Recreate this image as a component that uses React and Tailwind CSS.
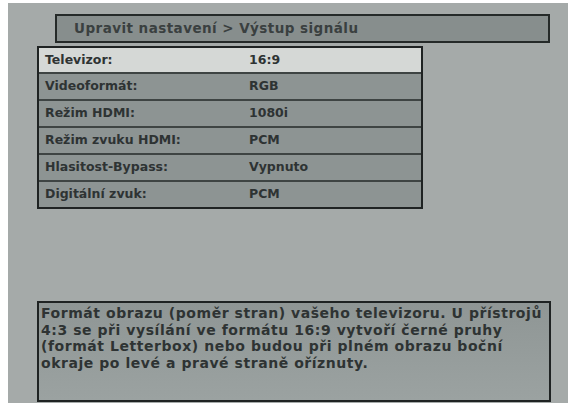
const rows = [
  ["Televizor:", "16:9"],
  ["Videoformát:", "RGB"],
  ["Režim HDMI:", "1080i"],
  ["Režim zvuku HDMI:", "PCM"],
  ["Hlasitost-Bypass:", "Vypnuto"],
  ["Digitální zvuk:", "PCM"],
];

export default function App() {
  return (
    <div className="w-[568px] h-[409px] bg-white pt-[3px] pl-[8px] font-['DejaVu_Sans',sans-serif] text-[#2e3333]">
      <div className="h-[400px] bg-[#a5aaa9] flex flex-col">
        <div className="ml-[47px] mt-[11px] w-[495px] h-[29px] border-2 border-[#252a29] bg-[#878e8d] pl-[17px] flex items-center text-[13.5px] font-bold tracking-[0.45px] text-[#3a4040]">
          Upravit nastavení &gt; Výstup signálu
        </div>

        <div className="ml-[29px] mt-[3px] w-[386px] border-2 border-[#1f2323] flex flex-col">
          {rows.map(([label, value], i) => (
            <div
              key={label}
              className={
                (i === 0 ? "bg-[#d5d8d6] h-[24px] " : "bg-[#8d9493] h-[27px] border-t-2 border-[#3e4443] ") +
                "flex items-center pl-[6px] text-[12.5px] font-bold"
              }
            >
              <span className="w-[204px]">{label}</span>
              <span>{value}</span>
            </div>
          ))}
        </div>

        <div className="flex-1" />

        <div className="ml-[29px] mb-[1px] w-[514px] h-[101px] border-2 border-[#1f2323] bg-gradient-to-b from-[#8f9695] to-[#9ba2a1] pl-[2px] pt-[2px] text-[14px] font-bold tracking-[0.55px] leading-[16.7px]">
          Formát obrazu (poměr stran) vašeho televizoru. U přístrojů
          <br />
          4:3 se při vysílání ve formátu 16:9 vytvoří černé pruhy
          <br />
          (formát Letterbox) nebo budou při plném obrazu boční
          <br />
          okraje po levé a pravé straně oříznuty.
        </div>
      </div>
    </div>
  );
}
